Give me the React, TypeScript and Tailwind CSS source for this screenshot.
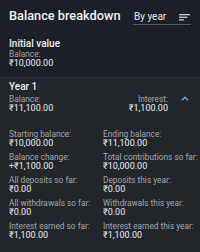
import React from "react";

const Field = ({ label, value }: { label: string; value: string }) => (
  <div className="flex flex-col">
    <div className="text-[8.3px] leading-[9px] text-[#a3a7ac] whitespace-nowrap">{label}</div>
    <div className="text-[9px] leading-[9.5px] text-[#eef0f2] whitespace-nowrap">{value}</div>
  </div>
);

export default function App() {
  return (
    <div
      className="w-[200px] h-[252px] overflow-hidden bg-[#1c1f25] flex flex-col"
      style={{ fontFamily: "Roboto, 'Noto Sans', sans-serif" }}
    >
      <div className="flex items-start justify-between px-[9px] h-[36px]">
        <div className="mt-[7.5px] text-[12.75px] leading-[16px] font-medium text-[#f1f2f3] whitespace-nowrap">
          Balance breakdown
        </div>
        <div className="mt-[9.5px] w-[58px] flex items-center justify-between border-b border-[#54575c] pb-[1px] pl-[1px] pr-[1px]">
          <span className="text-[10px] leading-[13px] text-[#e8e9ea]">By year</span>
          <svg width="11" height="8" viewBox="0 0 11 8" className="mt-[1px]">
            <rect x="0" y="1" width="11" height="1.3" fill="#c9cbce" />
            <rect x="0" y="3.6" width="8.5" height="1.3" fill="#c9cbce" />
            <rect x="0" y="6.2" width="5" height="1.3" fill="#c9cbce" />
          </svg>
        </div>
      </div>
      <div className="flex flex-col px-[9px] h-[41px]">
        <div className="text-[10px] leading-[13px] font-medium text-[#eef0f2] mt-[1px]">Initial value</div>
        <Field label="Balance:" value="₹10,000.00" />
      </div>
      <div className="flex-1 bg-[#22252a] border-t border-[#2b2e33] flex flex-col pt-[2px]">
        <div className="px-[9px] text-[10px] leading-[13px] font-medium text-[#eef0f2]">Year 1</div>
        <div className="flex items-start pl-[9px] mt-[2px]">
          <Field label="Balance:" value="₹11,100.00" />
          <div className="ml-auto flex flex-col items-end text-right">
            <div className="text-[8.3px] leading-[9px] text-[#a3a7ac]">Interest:</div>
            <div className="text-[9px] leading-[9.5px] text-[#eef0f2]">₹1,100.00</div>
          </div>
          <div className="w-[32px] pl-[13px] pt-[1px]">
            <svg width="8" height="5" viewBox="0 0 8 5">
              <path d="M1 4.2 L4 1.2 L7 4.2" fill="none" stroke="#6aaedb" strokeWidth="1.3" />
            </svg>
          </div>
        </div>
        <div className="grid grid-cols-[94px_1fr] gap-y-[4.5px] px-[9px] mt-[16px]">
          <Field label="Starting balance:" value="₹10,000.00" />
          <Field label="Ending balance:" value="₹11,100.00" />
          <Field label="Balance change:" value="+₹1,100.00" />
          <Field label="Total contributions so far:" value="₹10,000.00" />
          <Field label="All deposits so far:" value="₹0.00" />
          <Field label="Deposits this year:" value="₹0.00" />
          <Field label="All withdrawals so far:" value="₹0.00" />
          <Field label="Withdrawals this year:" value="₹0.00" />
          <Field label="Interest earned so far:" value="₹1,100.00" />
          <Field label="Interest earned this year:" value="₹1,100.00" />
        </div>
      </div>
    </div>
  );
}
